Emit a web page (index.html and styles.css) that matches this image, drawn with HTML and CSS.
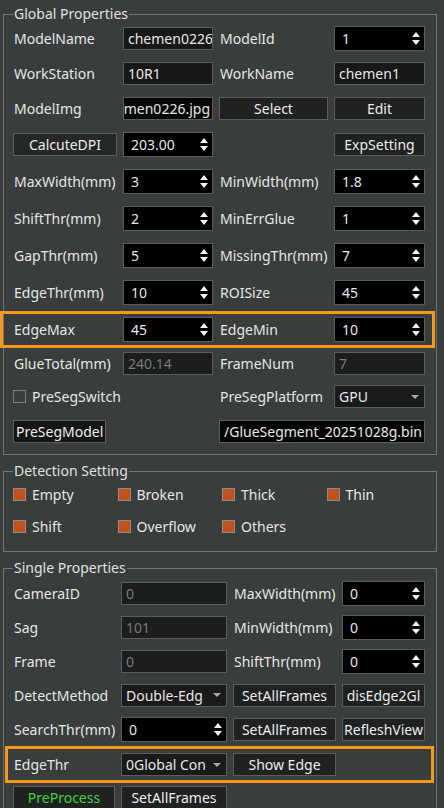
FILE: index.html
```html
<!DOCTYPE html>
<html lang="en">
<head>
  <meta charset="UTF-8" />
  <meta name="viewport" content="width=device-width, initial-scale=1.0"/>
  <title>Glue Inspection Properties</title>
  <link rel="stylesheet" href="styles.css">
</head>
<body>

  <fieldset class="group global">
    <legend>Global Properties</legend>

    <div class="row">
      <span class="label">ModelName</span>
      <div class="edit">chemen0226</div>
      <span class="label">ModelId</span>
      <div class="spin"><span class="val">1</span><span class="arrows"><i class="up"></i><i class="down"></i></span></div>
    </div>

    <div class="row">
      <span class="label">WorkStation</span>
      <div class="edit">10R1</div>
      <span class="label">WorkName</span>
      <div class="edit">chemen1</div>
    </div>

    <div class="row">
      <span class="label">ModelImg</span>
      <div class="edit dark clip">men0226.jpg</div>
      <div class="btn">Select</div>
      <div class="btn">Edit</div>
    </div>

    <div class="row spinrow">
      <div class="btn light">CalcuteDPI</div>
      <div class="spin"><span class="val">203.00</span><span class="arrows"><i class="up"></i><i class="down"></i></span></div>
      <span></span>
      <div class="btn">ExpSetting</div>
    </div>

    <div class="row spinrow">
      <span class="label">MaxWidth(mm)</span>
      <div class="spin"><span class="val">3</span><span class="arrows"><i class="up"></i><i class="down"></i></span></div>
      <span class="label">MinWidth(mm)</span>
      <div class="spin"><span class="val">1.8</span><span class="arrows"><i class="up"></i><i class="down"></i></span></div>
    </div>

    <div class="row spinrow">
      <span class="label">ShiftThr(mm)</span>
      <div class="spin"><span class="val">2</span><span class="arrows"><i class="up"></i><i class="down"></i></span></div>
      <span class="label">MinErrGlue</span>
      <div class="spin"><span class="val">1</span><span class="arrows"><i class="up"></i><i class="down"></i></span></div>
    </div>

    <div class="row spinrow">
      <span class="label">GapThr(mm)</span>
      <div class="spin"><span class="val">5</span><span class="arrows"><i class="up"></i><i class="down"></i></span></div>
      <span class="label">MissingThr(mm)</span>
      <div class="spin"><span class="val">7</span><span class="arrows"><i class="up"></i><i class="down"></i></span></div>
    </div>

    <div class="row spinrow">
      <span class="label">EdgeThr(mm)</span>
      <div class="spin"><span class="val">10</span><span class="arrows"><i class="up"></i><i class="down"></i></span></div>
      <span class="label">ROISize</span>
      <div class="spin"><span class="val">45</span><span class="arrows"><i class="up"></i><i class="down"></i></span></div>
    </div>

    <div class="row marked">
      <span class="label">EdgeMax</span>
      <div class="spin"><span class="val">45</span><span class="arrows"><i class="up"></i><i class="down"></i></span></div>
      <span class="label">EdgeMin</span>
      <div class="spin"><span class="val">10</span><span class="arrows"><i class="up"></i><i class="down"></i></span></div>
    </div>

    <div class="row short">
      <span class="label">GlueTotal(mm)</span>
      <div class="edit off">240.14</div>
      <span class="label">FrameNum</span>
      <div class="edit off">7</div>
    </div>

    <div class="row">
      <span class="check wide"><span class="box"></span>PreSegSwitch</span>
      <span class="label">PreSegPlatform</span>
      <div class="combo">GPU<span class="caret"></span></div>
    </div>

    <div class="row">
      <div class="btn model">PreSegModel</div>
      <span></span>
      <div class="edit dark clip path">/GlueSegment_20251028g.bin</div>
    </div>
  </fieldset>

  <fieldset class="group detect">
    <legend>Detection Setting</legend>
    <div class="checks">
      <span class="check"><span class="box on"></span>Empty</span>
      <span class="check"><span class="box on"></span>Broken</span>
      <span class="check"><span class="box on"></span>Thick</span>
      <span class="check"><span class="box on"></span>Thin</span>
      <span class="check"><span class="box on"></span>Shift</span>
      <span class="check"><span class="box on"></span>Overflow</span>
      <span class="check"><span class="box on"></span>Others</span>
    </div>
  </fieldset>

  <fieldset class="group single">
    <legend>Single Properties</legend>

    <div class="row">
      <span class="label">CameraID</span>
      <div class="edit off">0</div>
      <span class="label">MaxWidth(mm)</span>
      <div class="spin"><span class="val">0</span><span class="arrows"><i class="up"></i><i class="down"></i></span></div>
    </div>

    <div class="row">
      <span class="label">Sag</span>
      <div class="edit off">101</div>
      <span class="label">MinWidth(mm)</span>
      <div class="spin"><span class="val">0</span><span class="arrows"><i class="up"></i><i class="down"></i></span></div>
    </div>

    <div class="row">
      <span class="label">Frame</span>
      <div class="edit off">0</div>
      <span class="label">ShiftThr(mm)</span>
      <div class="spin"><span class="val">0</span><span class="arrows"><i class="up"></i><i class="down"></i></span></div>
    </div>

    <div class="row">
      <span class="label">DetectMethod</span>
      <div class="combo">Double-Edg<span class="caret"></span></div>
      <div class="btn">SetAllFrames</div>
      <div class="btn tight">disEdge2Gl</div>
    </div>

    <div class="row">
      <span class="label">SearchThr(mm)</span>
      <div class="spin"><span class="val">0</span><span class="arrows"><i class="up"></i><i class="down"></i></span></div>
      <div class="btn">SetAllFrames</div>
      <div class="btn tight">RefleshView</div>
    </div>

    <div class="row marked">
      <span class="label">EdgeThr</span>
      <div class="combo">0Global Con<span class="caret"></span></div>
      <div class="btn">Show Edge</div>
      <span></span>
    </div>

    <div class="row last">
      <div class="btn go">PreProcess</div>
      <div class="btn">SetAllFrames</div>
    </div>
  </fieldset>

</body>
</html>
```

FILE: styles.css
```css
* {
  box-sizing: border-box;
}

body {
  margin: 0;
  height: 808px;
  overflow: hidden;
  background-color: #393d3b;
  color: #e6e6e6;
  font-family: "Noto Sans", "Liberation Sans", sans-serif;
  font-size: 14px;
}

/* group boxes */
.group {
  margin: 9px 7px 0 3px;
  padding: 0 10px 5px 9px;
  border: 1px solid #6f7371;
  min-width: 0;
}

.group.global {
  margin-top: 7px;
}

.group.detect {
  padding-bottom: 9px;
}

.group.single {
  padding-top: 1px;
}

.group legend {
  padding: 0 1px;
  line-height: 14px;
  color: #e0e0e0;
}

/* form rows */
.row {
  display: grid;
  grid-template-columns: 104px 90px 109px 91px;
  column-gap: 6px;
  align-items: center;
  height: 35px;
}

.row.spinrow {
  height: 37px;
}

.row.short {
  height: 31px;
}

.row.marked {
  height: 31px;
  margin: 3px -6px 3px -10px;
  padding: 0 6px 0 10px;
  outline: 3px solid #f39a1e;
}

.single .row {
  grid-template-columns: 102px 106px 103px 83px;
  height: 34px;
}

.single .row.marked {
  height: 31px;
  margin: 3px -5px 3px -5px;
  padding: 0 5px;
}

.single .row.last {
  height: 28px;
}

.label {
  padding-left: 1px;
  white-space: nowrap;
}

/* controls */
.edit,
.combo,
.btn {
  height: 23px;
  border: 1px solid #5b5d5c;
  line-height: 21px;
  white-space: nowrap;
  overflow: hidden;
}

.edit {
  display: flex;
  align-items: center;
  padding: 0 4px;
  background-color: #181818;
}

.edit.dark {
  background-color: #050505;
}

.edit.clip {
  justify-content: flex-end;
  padding: 0 2px;
}

.edit.path {
  grid-column: 3 / 5;
}

.edit.off {
  background-color: #1c1d1d;
  color: #7a7a7a;
}

.spin {
  display: flex;
  align-items: center;
  height: 25px;
  padding: 0 4px 0 7px;
  background-color: #000;
  border: 1px solid #5b5d5c;
}

.spin .val {
  flex: 1;
  line-height: 23px;
}

.arrows {
  display: flex;
  flex-direction: column;
  gap: 3px;
}

.arrows i {
  width: 0;
  height: 0;
  border-left: 4px solid transparent;
  border-right: 4px solid transparent;
}

.arrows .up {
  border-bottom: 5px solid #f2f2f2;
}

.arrows .down {
  border-top: 5px solid #f2f2f2;
}

.combo {
  display: flex;
  align-items: center;
  justify-content: space-between;
  padding: 0 5px 0 4px;
  background-color: #1a1a1a;
}

.caret {
  flex: none;
  width: 0;
  height: 0;
  margin-left: 4px;
  border-left: 4px solid transparent;
  border-right: 4px solid transparent;
  border-top: 4px solid #a8a8a8;
}

.btn {
  padding: 0 2px;
  background-color: #202121;
  text-align: center;
  color: #ececec;
}

.btn.light {
  background-color: #262727;
}

.btn.tight {
  padding: 0 1px;
}

.btn.model {
  width: 93px;
  text-align: left;
  background-color: #161616;
}

.btn.go {
  color: #3fd23f;
}

/* checkboxes */
.checks {
  display: grid;
  grid-template-columns: repeat(4, 104.5px);
  grid-auto-rows: 32px;
  align-items: center;
}

.check {
  display: flex;
  align-items: center;
  gap: 6px;
  white-space: nowrap;
}

.check.wide {
  grid-column: 1 / 3;
}

.box {
  flex: none;
  width: 13px;
  height: 13px;
  border: 1px solid #7d7f7e;
}

.box.on {
  background-color: #c2521c;
  border-color: #8a8a8a;
}
```
